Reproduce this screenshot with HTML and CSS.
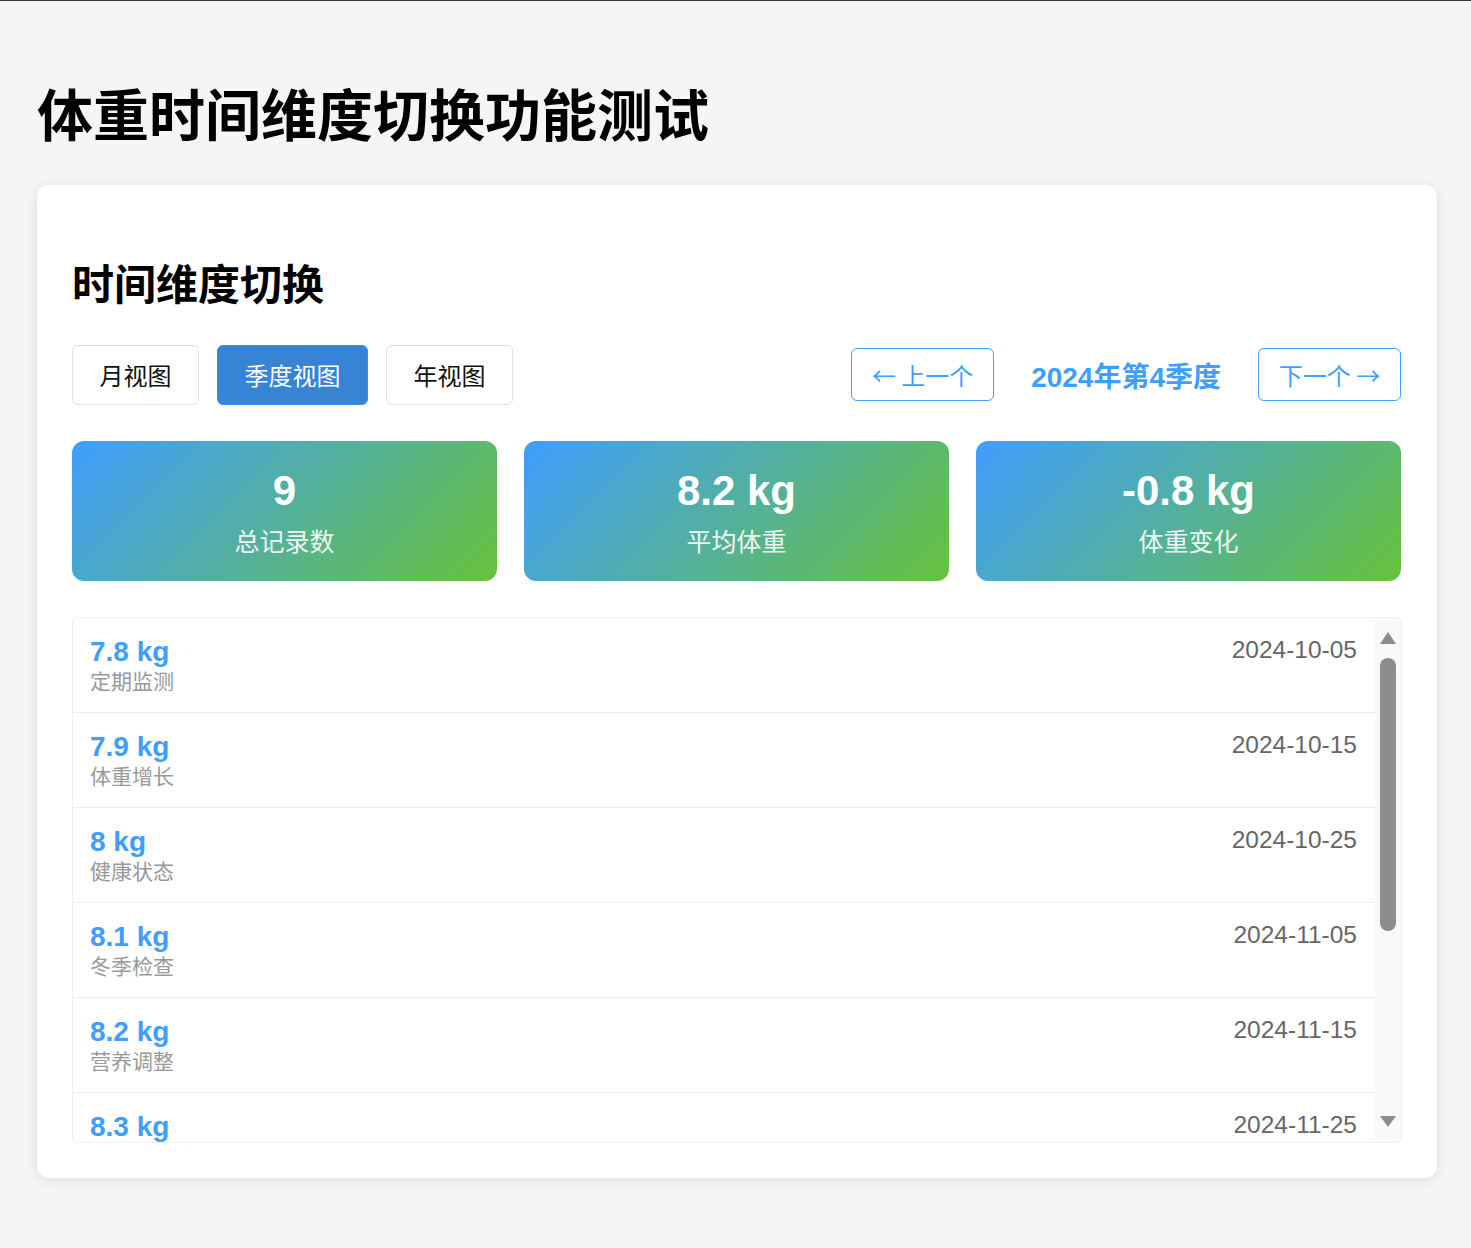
FILE: index.html
```html
<!DOCTYPE html>
<html lang="zh-CN">
<head>
<meta charset="utf-8">
<title>体重时间维度切换功能测试</title>
<link rel="stylesheet" href="styles.css">
</head>
<body>
<h1 class="page-title">体重时间维度切换功能测试</h1>
<div class="card">
  <h2 class="section-title">时间维度切换</h2>
  <div class="controls">
    <div class="modes">
      <button class="mode-btn">月视图</button>
      <button class="mode-btn active">季度视图</button>
      <button class="mode-btn">年视图</button>
    </div>
    <div class="nav">
      <button class="nav-btn">← 上一个</button>
      <span class="period">2024年第4季度</span>
      <button class="nav-btn">下一个 →</button>
    </div>
  </div>
  <div class="stats">
    <div class="stat"><div class="stat-value">9</div><div class="stat-label">总记录数</div></div>
    <div class="stat"><div class="stat-value">8.2 kg</div><div class="stat-label">平均体重</div></div>
    <div class="stat"><div class="stat-value">-0.8 kg</div><div class="stat-label">体重变化</div></div>
  </div>
  <div class="records">
    <div class="rows">
      <div class="record"><div class="record-main"><div class="weight">7.8 kg</div><div class="note">定期监测</div></div><div class="date">2024-10-05</div></div>
      <div class="record"><div class="record-main"><div class="weight">7.9 kg</div><div class="note">体重增长</div></div><div class="date">2024-10-15</div></div>
      <div class="record"><div class="record-main"><div class="weight">8 kg</div><div class="note">健康状态</div></div><div class="date">2024-10-25</div></div>
      <div class="record"><div class="record-main"><div class="weight">8.1 kg</div><div class="note">冬季检查</div></div><div class="date">2024-11-05</div></div>
      <div class="record"><div class="record-main"><div class="weight">8.2 kg</div><div class="note">营养调整</div></div><div class="date">2024-11-15</div></div>
      <div class="record"><div class="record-main"><div class="weight">8.3 kg</div></div><div class="date">2024-11-25</div></div>
    </div>
    <div class="scrollbar">
      <div class="sb-btn"><span class="arrow-up"></span></div>
      <div class="sb-track"><div class="sb-thumb"></div></div>
      <div class="sb-btn"><span class="arrow-down"></span></div>
    </div>
  </div>
</div>
</body>
</html>
```
FILE: styles.css
```css
html {
  background: #f5f5f5;
  border-top: 1px solid #333;
}
body {
  margin: 0;
  padding: 0 34px 40px 37px;
  font-family: "Liberation Sans", "Noto Sans CJK SC", sans-serif;
  color: #000;
}
.page-title {
  margin: 77px 0 40px;
  font-size: 56px;
  line-height: 1.2;
  font-weight: 700;
  font-family: "Noto Sans CJK SC", sans-serif;
}
.card {
  width: 1400px;
  box-sizing: border-box;
  background: #fff;
  border-radius: 12px;
  box-shadow: 0 2px 12px rgba(0, 0, 0, 0.1);
  padding: 35px 36px 35px 35px;
}
.section-title {
  margin: 37px 0 37px;
  font-size: 42px;
  line-height: 1.2;
  font-weight: 700;
  font-family: "Noto Sans CJK SC", sans-serif;
}
.controls {
  display: flex;
  justify-content: space-between;
  align-items: center;
}
.modes {
  display: flex;
  gap: 18px;
}
.mode-btn {
  height: 60px;
  padding: 0 26.5px;
  border: 1px solid #dcdfe6;
  border-radius: 6px;
  background: #fff;
  color: #111;
  font-family: "Noto Sans CJK SC", sans-serif;
  font-size: 24px;
  cursor: pointer;
}
.mode-btn.active {
  background: #3784d4;
  border-color: #3a8ee6;
  color: #fff;
}
.nav {
  display: flex;
  align-items: center;
  gap: 37px;
}
.nav-btn {
  height: 53px;
  width: 143px;
  padding: 0;
  border: 1px solid #409eff;
  border-radius: 6px;
  background: #fff;
  color: #409eff;
  font-family: "Noto Sans CJK SC", sans-serif;
  font-size: 24px;
  cursor: pointer;
}
.period {
  color: #409eff;
  font-size: 28px;
  font-weight: 700;
}
.stats {
  display: grid;
  grid-template-columns: repeat(3, 1fr);
  gap: 27px;
  margin-top: 36px;
}
.stat {
  height: 140px;
  box-sizing: border-box;
  padding-top: 25px;
  border-radius: 12px;
  background: linear-gradient(135deg, #409eff, #67c23a);
  color: #fff;
  text-align: center;
}
.stat-value {
  font-size: 42px;
  font-weight: 700;
  line-height: 1.2;
}
.stat-label {
  margin-top: 8px;
  font-size: 25px;
  line-height: 1.5;
  opacity: 0.9;
}
.records {
  display: flex;
  margin-top: 36px;
  margin-right: -1px;
  height: 526px;
  box-sizing: border-box;
  border: 1px solid #ebeef5;
  border-radius: 6px;
  overflow: hidden;
}
.rows {
  flex: 1;
  overflow: hidden;
}
.record {
  display: flex;
  justify-content: space-between;
  align-items: flex-start;
  height: 95px;
  box-sizing: border-box;
  padding: 17px 18px 0 17px;
  border-bottom: 1px solid #ebeef5;
}
.weight {
  color: #409eff;
  font-size: 28px;
  font-weight: 700;
  line-height: 1.2;
}
.note {
  margin-top: 1px;
  color: #999;
  font-size: 21px;
  line-height: 1.2;
}
.date {
  color: #666;
  font-size: 24.5px;
  line-height: 1.2;
}
.scrollbar {
  width: 25px;
  display: flex;
  flex-direction: column;
  background: #f9f9f9;
  border-right: 1px solid #fdfdfd;
}
.sb-btn {
  height: 40px;
  display: flex;
  align-items: center;
  justify-content: center;
}
.arrow-up {
  width: 0;
  height: 0;
  border-left: 8px solid transparent;
  border-right: 8px solid transparent;
  border-bottom: 12px solid #8c8c8c;
}
.arrow-down {
  width: 0;
  height: 0;
  border-left: 8px solid transparent;
  border-right: 8px solid transparent;
  border-top: 11px solid #8c8c8c;
}
.sb-track {
  flex: 1;
  padding: 0 4px 0 5px;
}
.sb-thumb {
  height: 273px;
  background: #8c8c8c;
  border-radius: 8px;
}
```
